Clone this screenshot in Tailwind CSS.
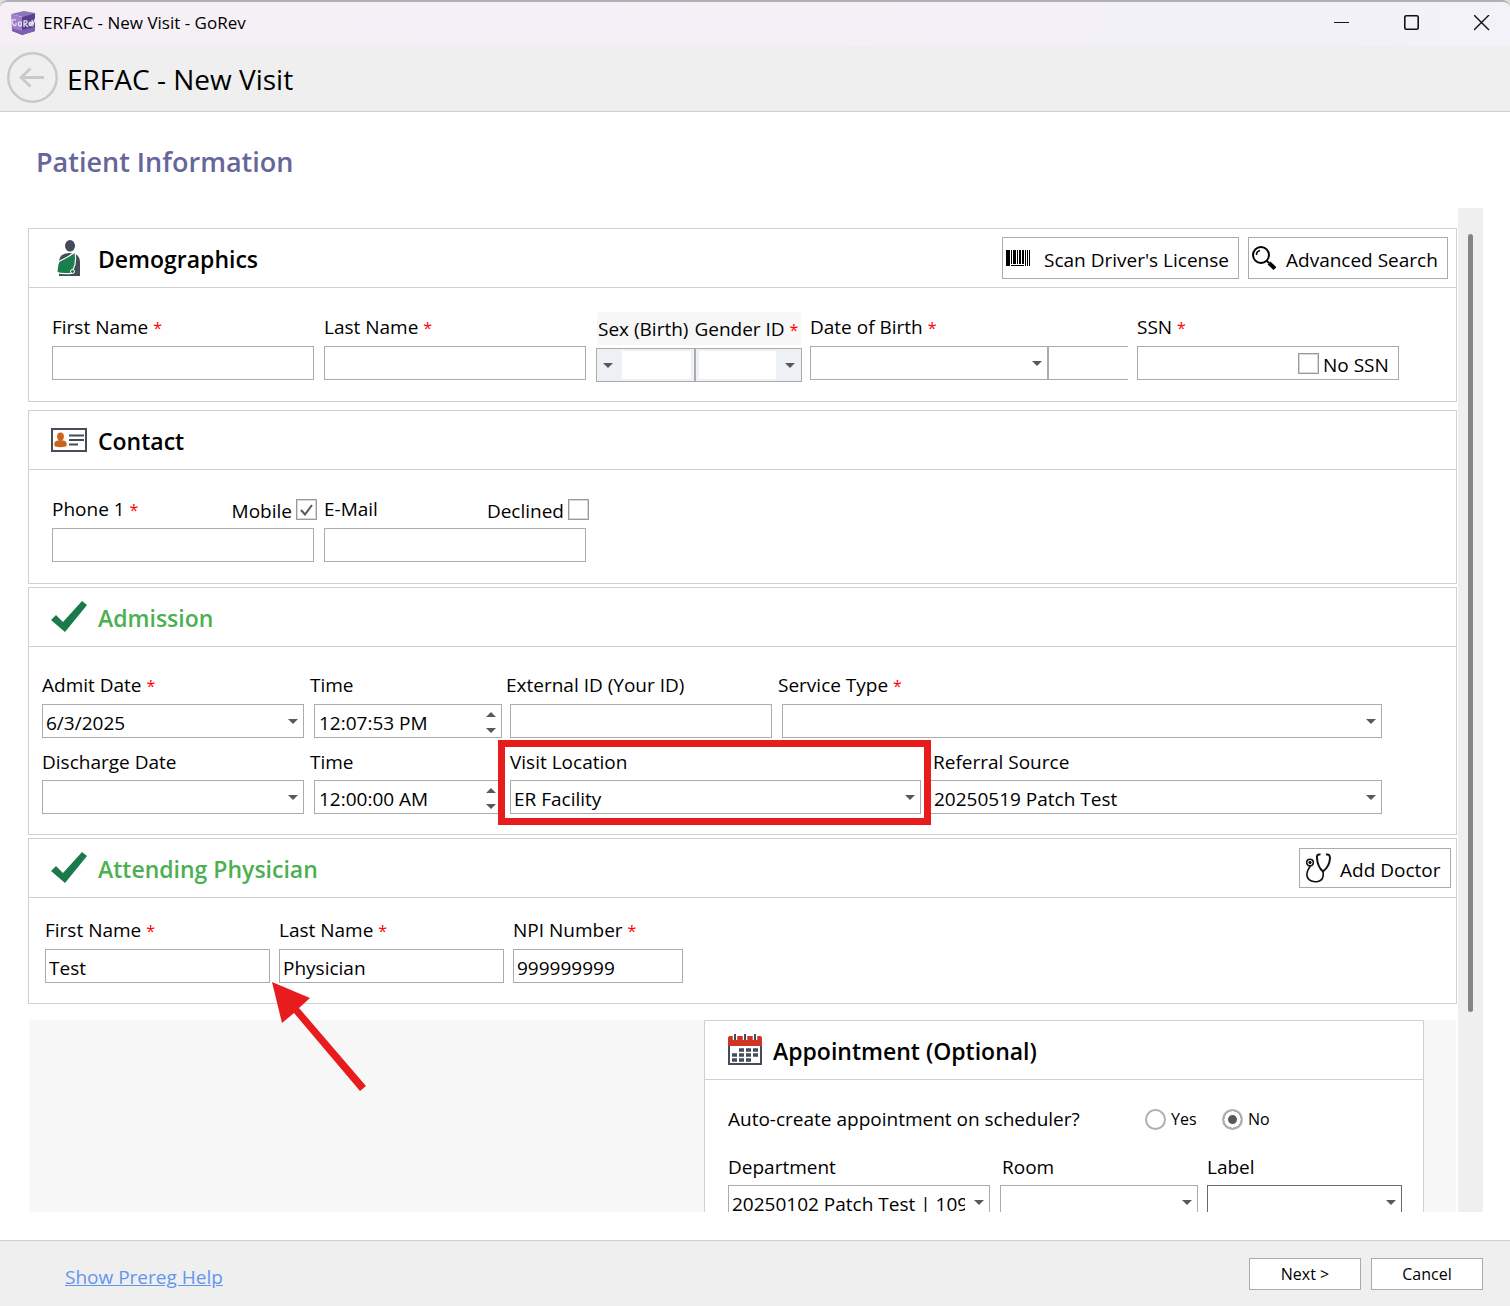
<!DOCTYPE html>
<html lang="en">
<head>
<meta charset="utf-8">
<meta name="viewport" content="width=device-width, initial-scale=1">
<title>ERFAC - New Visit - GoRev</title>
<script src="https://cdn.jsdelivr.net/npm/@tailwindcss/browser@4"></script>
</head>
<body class="bg-[#dedede] font-['Open_Sans','Noto_Sans',sans-serif] text-[19px] leading-6 text-black">
<svg class="hidden" aria-hidden="true">
  <symbol id="down" viewBox="0 0 10 5"><path d="M0 0h10L5 5z" fill="#595959"/></symbol>
  <symbol id="spin" viewBox="0 0 10 21"><path d="M0 5h10L5 0zM0 16h10l-5 5z" fill="#595959"/></symbol>
  <symbol id="tick" viewBox="0 0 36 32"><path d="M0 19l5-5 7 7L31 0l5 4-22 27z" fill="#1b7a4b"/></symbol>
</svg>
<div class="flex h-screen flex-col overflow-hidden rounded-t-lg border-t-2 border-[#b0b0b0] bg-white">

  <header class="shrink-0">
    <div class="flex h-[43px] items-center bg-linear-to-r from-[#f6eff6] to-[#f2f2f8] pr-5 pb-0.5 pl-[11px]">
      <svg class="mr-2 h-6 w-6" viewBox="0 0 24 24" aria-hidden="true">
        <path d="M0 3l13-3 11 2-12 4z" fill="#8d76b8"/>
        <path d="M0 3l11 3v18L1 20z" fill="#9f7fc8"/>
        <path d="M11 6l13-4v18l-13 4z" fill="#55428c"/>
        <path d="M1 17l10 3v4L1 20zM11 19l13-3v4l-13 4z" fill="#7c5fae"/>
        <path d="M5 9c-3-1-4 0-4 2s3 5 4 3v-2M9 11c-2-1-2 4 0 4s2-4 0-4M13 16v-6c4-1 4 2 1 3l3 3M18 13h3c0-3-3-2-3 0s2 2 3 1M21 9l1 5 2-6" fill="none" stroke="#e6def2" stroke-width="1.3"/>
      </svg>
      <span class="text-[17px]">ERFAC - New Visit - GoRev</span>
      <div class="ml-auto flex items-center gap-[54px]">
        <button aria-label="Minimize"><svg class="h-4 w-4" viewBox="0 0 16 16"><path d="M0 7.500h15" stroke="#111"/></svg></button>
        <button aria-label="Maximize"><svg class="h-4 w-4" viewBox="0 0 16 16"><rect x="0.800" y="0.800" width="13.400" height="13.400" rx="1.500" fill="none" stroke="#111" stroke-width="1.600"/></svg></button>
        <button aria-label="Close"><svg class="h-4 w-4" viewBox="0 0 16 16"><path d="M0 0l15 15M15 0L0 15" stroke="#111" stroke-width="1.400"/></svg></button>
      </div>
    </div>
    <div class="flex h-[67px] items-center gap-2 border-b border-[#d0d0d0] bg-[#efefef] pl-[7px]">
      <button aria-label="Back"><svg class="h-[52px] w-[52px]" viewBox="0 0 52 52" fill="none" stroke="#c9c9c9"><circle cx="25.500" cy="25.500" r="24.200" stroke-width="2.500"/><path d="M37 25.500H14M23.500 16.500l-9.500 9 9.500 9" stroke-width="2.800"/></svg></button>
      <h1 class="pt-0.5 text-[28px] leading-9">ERFAC - New Visit</h1>
    </div>
  </header>

  <main class="flex min-h-0 flex-1 flex-col pr-[27px] pb-7 pl-7">
    <h2 class="h-24 shrink-0 pt-8 pl-2 text-[27px] leading-9 font-semibold text-[#66669a]">Patient Information</h2>

    <form id="visit" class="flex min-h-0 flex-1 gap-px">
      <div class="min-w-0 flex-1 overflow-hidden pt-5">

        <section class="mb-2 border border-[#d0d0d0]">
          <div class="flex h-[59px] items-center border-b border-[#d0d0d0] pr-2 pl-[22px]">
            <svg class="mr-[11px] h-9 w-9" viewBox="0 0 36 36" aria-hidden="true">
              <ellipse cx="19" cy="5.800" rx="5" ry="5.800" fill="#454c59"/>
              <path d="M8 36V22c0-6 4-9 11-9s10 4 10 9v14z" fill="#454c59"/>
              <path d="M23 12.500c-4 4-10 6-15 9-2 4-2 7-2 11 5 2 11 1 15 1l1-4c3-5 3-11 2-17z" fill="#1b7f4c" stroke="#fff" stroke-width="1.200"/>
              <circle cx="21.500" cy="31.500" r="2" fill="#1b7f4c" stroke="#fff"/>
            </svg>
            <h3 class="pt-0.5 text-[23px] leading-8 font-semibold">Demographics</h3>
            <div class="ml-auto flex gap-[9px]">
              <button type="button" class="flex h-[42px] w-[237px] items-center border border-[#ababab] pl-[3px]">
                <svg class="mr-[14px] h-4 w-6" viewBox="0 0 24 16" aria-hidden="true"><path d="M0 0h4v16H0zM5 0h1v14H5zM7 0h3v14H7zM11 0h1v14h-1zM13 0h2v14h-2zM16 0h2v14h-2zM19 0h1v16h-1zM21 0h1v16h-1zM23 0h1v16h-1zM5 15h13v1H5z"/></svg>
                <span class="pt-1">Scan Driver's License</span>
              </button>
              <button type="button" class="flex h-[42px] w-[200px] items-center border border-[#ababab] pl-[3px]">
                <svg class="mr-[10px] h-6 w-6" viewBox="0 0 24 24" fill="none" stroke="#000" aria-hidden="true"><circle cx="9" cy="9" r="8" stroke-width="2"/><path d="M4.500 9A4.500 4.500 0 0 1 8 4.500" stroke-width="1.500"/><path d="M15 15l2 2" stroke-width="2"/><path d="M17 17l6 5.500" stroke-width="4"/></svg>
                <span class="pt-1">Advanced Search</span>
              </button>
            </div>
          </div>
          <div class="flex pt-[27px] pb-[21px] pl-[23px]">
            <div class="mr-[10px] flex w-[262px] flex-col gap-[7px]">
              <label for="first">First Name <span class="text-base leading-none text-[#f00]">*</span></label>
              <input id="first" class="h-[34px] border border-[#ababab] px-[3px] pt-1">
            </div>
            <div class="mr-[10px] flex w-[262px] flex-col gap-[7px]">
              <label for="last">Last Name <span class="text-base leading-none text-[#f00]">*</span></label>
              <input id="last" class="h-[34px] border border-[#ababab] px-[3px] pt-1">
            </div>
            <div class="-mt-[3px] mr-2 -mb-1 flex w-[206px] flex-col gap-[3px]">
              <div class="mx-px flex h-[33px] items-center gap-[6px] bg-[#f7f7f7] pl-px whitespace-nowrap">
                <label for="sex">Sex (Birth)</label>
                <label for="gender">Gender ID <span class="text-base leading-none text-[#f00]">*</span></label>
              </div>
              <div class="flex h-[34px]">
                <div class="flex w-[99px] items-center border border-[#ababab] bg-[#edf0f5] py-0.5 pr-[3px] pl-[6px]">
                  <svg class="mr-[9px] h-[5px] w-[10px]" aria-hidden="true"><use href="#down"/></svg>
                  <select id="sex" class="h-full min-w-0 flex-1 appearance-none bg-white"><option></option></select>
                </div>
                <div class="flex flex-1 items-center border border-[#ababab] bg-[#edf0f5] py-0.5 pr-[6px] pl-[3px]">
                  <select id="gender" class="h-full min-w-0 flex-1 appearance-none bg-white"><option></option></select>
                  <svg class="ml-[9px] h-[5px] w-[10px]" aria-hidden="true"><use href="#down"/></svg>
                </div>
              </div>
            </div>
            <div class="mr-[9px] flex w-[318px] flex-col gap-[7px]">
              <label for="dob">Date of Birth <span class="text-base leading-none text-[#f00]">*</span></label>
              <div class="flex h-[34px]">
                <div class="relative w-[238px]">
                  <select id="dob" class="h-full w-full appearance-none border border-[#ababab] px-[3px] pt-1"><option></option></select>
                  <svg class="pointer-events-none absolute top-[15px] right-[6px] h-[5px] w-[10px]" aria-hidden="true"><use href="#down"/></svg>
                </div>
                <input aria-label="Age" class="w-20 border border-r-0 border-[#ababab] px-[3px] pt-1">
              </div>
            </div>
            <div class="flex w-[262px] flex-col gap-[7px]">
              <label for="ssn">SSN <span class="text-base leading-none text-[#f00]">*</span></label>
              <div class="flex h-[34px] items-center border border-[#ababab] pr-[6px]">
                <input id="ssn" class="h-full min-w-0 flex-1 px-[3px]">
                <input id="nossn" type="checkbox" class="mr-1 h-[21px] w-[21px] appearance-none border border-[#9a9a9a] bg-white shadow-[inset_0_0_0_1px_#d8d8d8]">
                <label for="nossn" class="w-[69px] pt-1">No SSN</label>
              </div>
            </div>
          </div>
        </section>

        <section class="mb-[3px] border border-[#d0d0d0]">
          <div class="flex h-[59px] items-center border-b border-[#d0d0d0] pl-[22px]">
            <svg class="mr-[11px] h-9 w-9" viewBox="0 0 36 36" aria-hidden="true">
              <rect x="1" y="7" width="34" height="22" fill="#fff" stroke="#454c59" stroke-width="2"/>
              <ellipse cx="9.500" cy="14.500" rx="3.400" ry="4" fill="#c8651b"/><path d="M3.500 24c-1-5 2-5.500 6-6 4 .5 7 1 6 6-2 1.500-10 1.500-12 0z" fill="#c8651b"/>
              <path d="M18 13.500h15M18 18h15M18 22.500h9" stroke="#454c59" stroke-width="1.800"/>
            </svg>
            <h3 class="pt-0.5 text-[23px] leading-8 font-semibold">Contact</h3>
          </div>
          <div class="flex gap-[10px] pt-[27px] pb-[21px] pl-[23px]">
            <div class="flex w-[262px] flex-col gap-[7px]">
              <div class="-mr-[3px] flex h-6 items-center">
                <label for="phone">Phone 1 <span class="text-base leading-none text-[#f00]">*</span></label>
                <label for="mobile" class="ml-auto pt-1">Mobile</label>
                <span class="relative ml-1 h-[21px] w-[21px]">
                  <input id="mobile" type="checkbox" checked class="block h-full w-full appearance-none border border-[#9a9a9a] bg-white shadow-[inset_0_0_0_1px_#d8d8d8]">
                  <svg class="pointer-events-none absolute top-[5px] left-1 h-3 w-[13px]" viewBox="0 0 13 12" fill="none" aria-hidden="true"><path d="M1 6l4 4.500L12 1" stroke="#595959" stroke-width="2"/></svg>
                </span>
              </div>
              <input id="phone" class="h-[34px] border border-[#ababab] px-[3px] pt-1">
            </div>
            <div class="flex w-[262px] flex-col gap-[7px]">
              <div class="-mr-[3px] flex h-6 items-center">
                <label for="email">E-Mail</label>
                <label for="declined" class="ml-auto pt-1">Declined</label>
                <input id="declined" type="checkbox" class="ml-1 h-[21px] w-[21px] appearance-none border border-[#9a9a9a] bg-white shadow-[inset_0_0_0_1px_#d8d8d8]">
              </div>
              <input id="email" class="h-[34px] border border-[#ababab] px-[3px] pt-1">
            </div>
          </div>
        </section>

        <section class="mb-[3px] border border-[#d0d0d0]">
          <div class="flex h-[59px] items-center border-b border-[#d0d0d0] pl-[22px]">
            <svg class="mr-[11px] h-8 w-9" aria-hidden="true"><use href="#tick"/></svg>
            <h3 class="pt-0.5 text-[23px] leading-8 font-semibold text-[#4caf50]">Admission</h3>
          </div>
          <div class="flex flex-col gap-3 pt-[26px] pb-5 pl-[13px]">
            <div class="grid grid-cols-[272px_196px_272px_600px]">
              <div class="flex w-[262px] flex-col gap-[7px]">
                <label for="admit">Admit Date <span class="text-base leading-none text-[#f00]">*</span></label>
                <div class="relative h-[34px]">
                  <select id="admit" class="h-full w-full appearance-none border border-[#ababab] px-[3px] pt-1"><option>6/3/2025</option></select>
                  <svg class="pointer-events-none absolute top-[15px] right-[6px] h-[5px] w-[10px]" aria-hidden="true"><use href="#down"/></svg>
                </div>
              </div>
              <div class="flex w-[188px] flex-col gap-[7px]">
                <label for="atime" class="-ml-1">Time</label>
                <div class="relative h-[34px]">
                  <input id="atime" value="12:07:53 PM" class="h-full w-full border border-[#ababab] px-1 pt-1">
                  <svg class="pointer-events-none absolute top-2 right-[6px] h-[21px] w-[10px]" aria-hidden="true"><use href="#spin"/></svg>
                </div>
              </div>
              <div class="flex w-[262px] flex-col gap-[7px]">
                <label for="ext" class="-ml-1">External ID (Your ID)</label>
                <input id="ext" class="h-[34px] border border-[#ababab] px-[3px] pt-1">
              </div>
              <div class="flex flex-col gap-[7px]">
                <label for="service" class="-ml-1">Service Type <span class="text-base leading-none text-[#f00]">*</span></label>
                <div class="relative h-[34px]">
                  <select id="service" class="h-full w-full appearance-none border border-[#ababab] px-[3px] pt-1"><option></option></select>
                  <svg class="pointer-events-none absolute top-[15px] right-[6px] h-[5px] w-[10px]" aria-hidden="true"><use href="#down"/></svg>
                </div>
              </div>
            </div>
            <div class="grid grid-cols-[272px_196px_420px_452px]">
              <div class="flex w-[262px] flex-col gap-[6px]">
                <label for="discharge">Discharge Date</label>
                <div class="relative h-[34px]">
                  <select id="discharge" class="h-full w-full appearance-none border border-[#ababab] px-[3px] pt-1"><option></option></select>
                  <svg class="pointer-events-none absolute top-[15px] right-[6px] h-[5px] w-[10px]" aria-hidden="true"><use href="#down"/></svg>
                </div>
              </div>
              <div class="flex w-[188px] flex-col gap-[6px]">
                <label for="dtime" class="-ml-1">Time</label>
                <div class="relative h-[34px]">
                  <input id="dtime" value="12:00:00 AM" class="h-full w-full border border-[#ababab] px-1 pt-1">
                  <svg class="pointer-events-none absolute top-2 right-[6px] h-[21px] w-[10px]" aria-hidden="true"><use href="#spin"/></svg>
                </div>
              </div>
              <div class="relative z-10 flex w-[411px] flex-col gap-[6px]">
                <label for="location">Visit Location</label>
                <div class="relative h-[34px]">
                  <select id="location" class="h-full w-full appearance-none border border-[#ababab] px-[3px] pt-1"><option>ER Facility</option></select>
                  <svg class="pointer-events-none absolute top-[15px] right-[6px] h-[5px] w-[10px]" aria-hidden="true"><use href="#down"/></svg>
                </div>
                <div class="pointer-events-none absolute -top-[10px] -right-[10px] -bottom-[11px] -left-3 border-[7px] border-[#e71c1c]"></div>
              </div>
              <div class="flex flex-col gap-[6px]">
                <label for="referral" class="pl-[3px]">Referral Source</label>
                <div class="relative h-[34px]">
                  <select id="referral" class="h-full w-full appearance-none border border-[#ababab] px-[3px] pt-1"><option>20250519 Patch Test</option></select>
                  <svg class="pointer-events-none absolute top-[15px] right-[6px] h-[5px] w-[10px]" aria-hidden="true"><use href="#down"/></svg>
                </div>
              </div>
            </div>
          </div>
        </section>

        <section class="relative mb-4 border border-[#d0d0d0]">
          <div class="flex h-[59px] items-center border-b border-[#d0d0d0] pr-[5px] pl-[22px]">
            <svg class="mr-[11px] h-8 w-9" aria-hidden="true"><use href="#tick"/></svg>
            <h3 class="pt-0.5 text-[23px] leading-8 font-semibold text-[#4caf50]">Attending Physician</h3>
            <button type="button" class="ml-auto flex h-10 w-[152px] items-center border border-[#ababab] pl-[6px]">
              <svg class="mr-[9px] h-[30px] w-[25px]" viewBox="0 0 25 30" fill="none" stroke="#111" aria-hidden="true">
                <circle cx="4" cy="9.500" r="3.300" stroke-width="1.600"/><circle cx="4" cy="9.500" r="1.200" fill="#111"/>
                <path d="M4.500 13C1.500 17 0 20 1.200 23.500 2.500 28 8 29.500 12 28.500c4.500-1 6-4 5-10" stroke-width="1.600"/>
                <path d="M14.500 1.500c-3-.5-4 1-3.500 4 .5 6 2.500 10 6 13 4-3 6.500-7 7-13 0-3-1-4.500-4-4" stroke-width="2"/>
              </svg>
              <span class="pt-1">Add Doctor</span>
            </button>
          </div>
          <div class="flex gap-[9px] pt-5 pb-5 pl-4">
            <div class="flex w-[225px] flex-col gap-[7px]">
              <label for="pfirst">First Name <span class="text-base leading-none text-[#f00]">*</span></label>
              <input id="pfirst" value="Test" class="h-[34px] border border-[#ababab] px-[3px] pt-1">
            </div>
            <div class="flex w-[225px] flex-col gap-[7px]">
              <label for="plast">Last Name <span class="text-base leading-none text-[#f00]">*</span></label>
              <input id="plast" value="Physician" class="h-[34px] border border-[#ababab] px-[3px] pt-1">
            </div>
            <div class="flex w-[170px] flex-col gap-[7px]">
              <label for="npi">NPI Number <span class="text-base leading-none text-[#f00]">*</span></label>
              <input id="npi" value="999999999" class="h-[34px] border border-[#ababab] px-[3px] pt-1">
            </div>
          </div>
          <svg class="pointer-events-none absolute top-[143px] left-[243px] z-10 h-[109px] w-[95px]" viewBox="0 0 95 109" aria-hidden="true"><path d="M0 0l38 16-11 10 67 78-6 5-66-78-12 10z" fill="#e71c1c"/></svg>
        </section>

        <div class="mx-px flex justify-end bg-[#f7f7f7] pr-8">
          <section class="h-[260px] w-[720px] border border-[#d0d0d0] bg-white">
            <div class="flex h-[59px] items-center border-b border-[#d0d0d0] pl-[22px]">
              <svg class="mr-[10px] h-8 w-9" viewBox="0 0 36 32" aria-hidden="true">
                <rect x="2" y="5" width="32" height="25" fill="#fff" stroke="#454c59" stroke-width="2"/>
                <path d="M1 4q0-2 2-2h30q2 0 2 2v8H1z" fill="#cf3427"/>
                <path d="M8 0v6M18 0v6M28 0v6" stroke="#fff" stroke-width="4.500"/>
                <path d="M8 0v6M18 0v6M28 0v6" stroke="#454c59" stroke-width="2"/>
                <path d="M12 16h20M5 21h27M5 26h20" stroke="#454c59" stroke-width="3.400" stroke-dasharray="5 2"/>
              </svg>
              <h3 class="pt-0.5 text-[23px] leading-8 font-semibold">Appointment (Optional)</h3>
            </div>
            <div class="flex flex-col gap-6 pt-[27px] pl-[23px]">
              <div role="radiogroup" aria-labelledby="autoq" class="flex h-6 items-center">
                <span id="autoq" class="w-[417px]">Auto-create appointment on scheduler?</span>
                <label class="flex w-[77px] items-center gap-[5px] text-base"><input type="radio" name="auto" class="h-[21px] w-[21px] appearance-none rounded-full border-2 border-[#b0b0b0] bg-white">Yes</label>
                <label class="flex items-center gap-[5px] text-base"><input type="radio" name="auto" checked class="h-[21px] w-[21px] appearance-none rounded-full border-2 border-[#b0b0b0] bg-[#595959] shadow-[inset_0_0_0_4px_#fff]">No</label>
              </div>
              <div class="flex">
                <div class="mr-[10px] flex w-[262px] flex-col gap-[6px]">
                  <label for="dept">Department</label>
                  <div class="relative h-[34px]">
                    <select id="dept" class="h-full w-full appearance-none border border-[#ababab] pt-1 pr-6 pl-[3px]"><option>20250102 Patch Test | 109865</option></select>
                    <svg class="pointer-events-none absolute top-[15px] right-[6px] h-[5px] w-[10px]" aria-hidden="true"><use href="#down"/></svg>
                  </div>
                </div>
                <div class="mr-[9px] flex w-[198px] flex-col gap-[6px]">
                  <label for="room" class="pl-0.5">Room</label>
                  <div class="relative h-[34px]">
                    <select id="room" class="h-full w-full appearance-none border border-[#ababab] px-[3px] pt-1"><option></option></select>
                    <svg class="pointer-events-none absolute top-[15px] right-[6px] h-[5px] w-[10px]" aria-hidden="true"><use href="#down"/></svg>
                  </div>
                </div>
                <div class="flex w-[195px] flex-col gap-[6px]">
                  <label for="lab">Label</label>
                  <div class="relative h-[34px]">
                    <select id="lab" class="h-full w-full appearance-none border border-[#6a6a6a] px-[3px] pt-1"><option></option></select>
                    <svg class="pointer-events-none absolute top-[15px] right-[6px] h-[5px] w-[10px]" aria-hidden="true"><use href="#down"/></svg>
                  </div>
                </div>
              </div>
            </div>
          </section>
        </div>
      </div>
      <div class="w-[25px] bg-[#efefef] pt-[26px] pb-[200px] pl-[10px]"><div class="h-full w-[5px] rounded-full bg-[#858585]"></div></div>
    </form>
  </main>

  <footer class="flex h-[66px] shrink-0 items-center justify-between border-t border-[#d0d0d0] bg-[#efefef] pr-[27px] pl-[65px]">
    <a href="#help" class="pt-[6px] text-[#6495ed] underline">Show Prereg Help</a>
    <div class="flex gap-[10px] text-base">
      <button type="submit" form="visit" class="h-8 w-28 border border-[#ababab] bg-white">Next &gt;</button>
      <button type="button" class="h-8 w-28 border border-[#ababab] bg-white">Cancel</button>
    </div>
  </footer>
</div>
</body>
</html>
